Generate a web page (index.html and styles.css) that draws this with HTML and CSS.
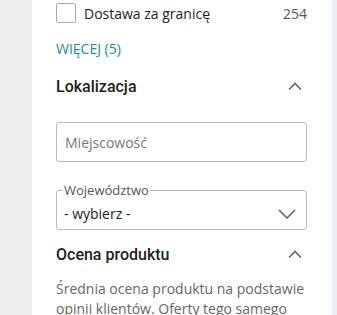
FILE: index.html
```html
<!DOCTYPE html>
<html lang="pl">
<head>
    <meta charset="UTF-8">
    <meta name="viewport" content="width=device-width, initial-scale=1.0">
    <title>Filtry</title>
    <link rel="stylesheet" href="styles.css">
</head>
<body>
    <div class="panel">
        <label class="check-row">
            <span class="box"></span>
            <span class="check-label">Dostawa za granicę</span>
            <span class="count">254</span>
        </label>

        <a class="more" href="#">WIĘCEJ (5)</a>

        <div class="section-head">
            <h2>Lokalizacja</h2>
            <svg class="chev" width="14" height="8" viewBox="0 0 14 8"><path d="M1 7.5 L7 1.5 L13 7.5" fill="none" stroke="#666" stroke-width="1.6"/></svg>
        </div>

        <div class="field">
            <input type="text" placeholder="Miejscowość">
        </div>

        <fieldset class="select-box">
            <legend>Województwo</legend>
            <span class="select-value">- wybierz -</span>
            <svg class="chev-down" width="18" height="10" viewBox="0 0 18 10"><path d="M1 1 L9 9 L17 1" fill="none" stroke="#666" stroke-width="1.6"/></svg>
        </fieldset>

        <div class="section-head rating-head">
            <h2>Ocena produktu</h2>
            <svg class="chev" width="14" height="8" viewBox="0 0 14 8"><path d="M1 7.5 L7 1.5 L13 7.5" fill="none" stroke="#666" stroke-width="1.6"/></svg>
        </div>

        <p class="desc">Średnia ocena produktu na podstawie opinii klientów. Oferty tego samego produktu</p>
    </div>
</body>
</html>
```

FILE: styles.css
```css
* {
    margin: 0;
    padding: 0;
    box-sizing: border-box;
}

body {
    font-family: "Open Sans", Arial, sans-serif;
    background-color: #eceff1;
    color: #222;
    height: 315px;
    overflow: hidden;
}

.panel {
    margin-left: 32px;
    width: 300px;
    height: 100%;
    background-color: #fff;
    padding: 0 25px 0 24px;
}

.check-row {
    display: flex;
    align-items: center;
    height: 26px;
    font-size: 14px;
}

.box {
    width: 20px;
    height: 20px;
    border: 1px solid #aaa;
    border-radius: 2px;
    margin-right: 8px;
    flex-shrink: 0;
}

.check-label {
    flex: 1;
    color: #222;
}

.count {
    color: #555;
}

.more {
    display: block;
    margin-top: 14px;
    font-size: 14px;
    color: #1b8d9c;
    text-decoration: none;
    line-height: 18px;
}

.section-head {
    display: flex;
    align-items: center;
    justify-content: space-between;
    height: 24px;
    margin-top: 16px;
}

.rating-head {
    margin-top: 12px;
}

.section-head h2 {
    font-family: Roboto, Arial, sans-serif;
    font-weight: 500;
    font-size: 16px;
    color: #222;
}

.chev {
    margin-right: 5px;
}

.field {
    margin-top: 24px;
}

.field input {
    width: 251px;
    height: 40px;
    border: 1px solid #bbb;
    border-radius: 3px;
    padding: 0 8px;
    font-family: "Open Sans", Arial, sans-serif;
    font-size: 14px;
    color: #222;
}

.field input::placeholder {
    color: #777;
}

.select-box {
    margin-top: 21px;
    width: 251px;
    height: 47px;
    border: 1px solid #bbb;
    border-radius: 3px;
    padding: 0 10px 0 7px;
    display: flex;
    align-items: center;
    position: relative;
}

.select-box legend {
    font-size: 13px;
    color: #555;
    padding: 0 1px;
    margin-left: -1px;
    line-height: 14px;
}

.select-value {
    font-size: 14px;
    color: #222;
}

.chev-down {
    position: absolute;
    right: 10px;
    top: 12px;
}

.desc {
    margin-top: 13px;
    font-size: 14px;
    line-height: 20px;
    color: #666;
}
```
